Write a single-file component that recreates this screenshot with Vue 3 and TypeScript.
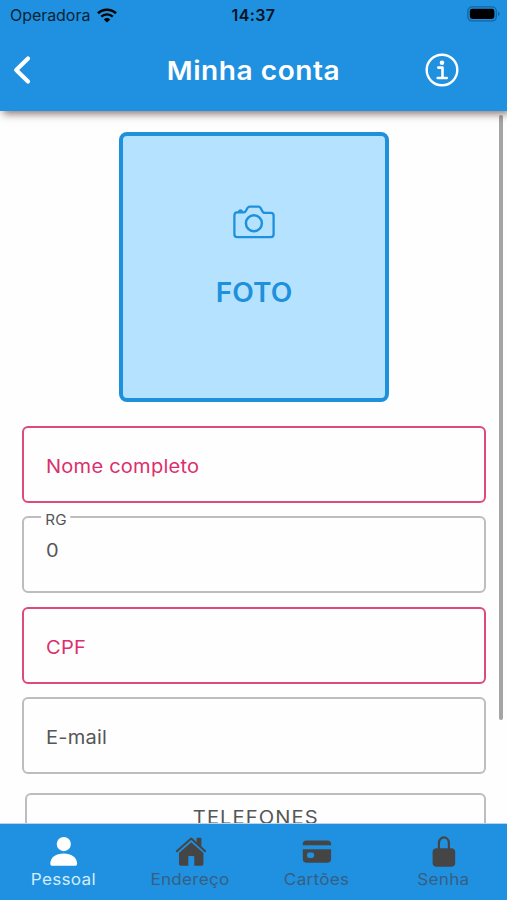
<script setup lang="ts">
interface Field {
  id: string
  label: string
  value?: string
  invalid?: boolean
}

const fields: Field[] = [
  { id: 'nome', label: 'Nome completo', invalid: true },
  { id: 'rg', label: 'RG', value: '0' },
  { id: 'cpf', label: 'CPF', invalid: true },
  { id: 'email', label: 'E-mail' },
]

const tabs = [
  { id: 'pessoal', label: 'Pessoal' },
  { id: 'endereco', label: 'Endereço' },
  { id: 'cartoes', label: 'Cartões' },
  { id: 'senha', label: 'Senha' },
]
const activeTab = 'pessoal'
</script>

<template>
  <div class="screen">
    <header class="header">
      <div class="status">
        <div class="carrier">
          <span class="carrier-name">Operadora</span>
          <svg class="wifi" width="20" height="15" viewBox="0 0 20 15">
            <path d="M1 5.3C6 .5 14 .5 19 5.3" fill="none" stroke="#000" stroke-width="2.6" />
            <path d="M4.2 8.7c3.4-3.1 8.2-3.1 11.6 0" fill="none" stroke="#000" stroke-width="2.4" />
            <path d="M6.8 11.4c1.8-1.8 4.6-1.8 6.4 0L10 14.6z" fill="#000" />
          </svg>
        </div>
        <span class="time">14:37</span>
        <div class="power">
          <svg width="34" height="16" viewBox="0 0 34 16">
            <rect x=".9" y=".9" width="28.4" height="14" rx="4.2" fill="none" stroke="#12669f" stroke-width="1.3" />
            <rect x="2.8" y="2.8" width="24.6" height="10.2" rx="2.4" fill="#000" />
            <path d="M31 5.6c2 .8 2 3.8 0 4.6z" fill="#12669f" />
          </svg>
        </div>
      </div>
      <div class="bar">
        <button class="icon-button back" aria-label="Voltar">
          <svg width="20" height="30" viewBox="0 0 20 30">
            <path d="M17 3.500 5.200 15 17 26.500" fill="none" stroke="#fff" stroke-width="4.200" stroke-linecap="round" stroke-linejoin="round" />
          </svg>
        </button>
        <h1 class="title">Minha conta</h1>
        <button class="icon-button info" aria-label="Informações">
          <svg width="34" height="34" viewBox="0 0 34 34">
            <circle cx="17" cy="17" r="15.300" fill="none" stroke="#fff" stroke-width="2.400" />
            <circle cx="17" cy="9.700" r="2.300" fill="#fff" />
            <path d="M13.300 14.600h4.200v10.100M12.700 25h9" fill="none" stroke="#fff" stroke-width="2.600" stroke-linecap="round" stroke-linejoin="round" />
          </svg>
        </button>
      </div>
    </header>

    <main class="content">
      <button class="photo">
        <svg class="camera" width="42" height="34" viewBox="0 0 42 34">
          <path d="M3.500 7.400H11c2.600 0 2.500-5.800 5.700-5.800h8.900c3 0 2.900 6.300 6.100 6.300h6.200c1.800 0 2.700.9 2.700 2.700v18.600c0 1.900-.9 2.900-2.700 2.900H4.100c-1.800 0-2.700-1-2.700-2.900V10.500c0-1.700.7-2.700 2.100-3.100z" fill="none" stroke="#1f90db" stroke-width="2.300" stroke-linejoin="round" />
          <path d="M4.600 7.200c.4-3.900 5.300-3.900 5.900 0z" fill="#1f90db" />
          <circle cx="20.900" cy="18.300" r="8" fill="none" stroke="#1f90db" stroke-width="2.500" />
        </svg>
        <span class="photo-label">FOTO</span>
      </button>

      <form class="form">
        <div v-for="f in fields" :key="f.id" class="field" :class="{ invalid: f.invalid, filled: f.value }">
          <span class="label">{{ f.label }}</span>
          <span v-if="f.value" class="value">{{ f.value }}</span>
        </div>
      </form>
      <div class="phones"><span class="phones-title">TELEFONES</span></div>
      <div class="scrollbar"></div>
    </main>

    <nav class="tabs">
      <a v-for="t in tabs" :key="t.id" class="tab" :class="{ active: t.id === activeTab }">
        <svg v-if="t.id === 'pessoal'" class="tab-icon" width="32" height="32" viewBox="0 0 32 32">
          <circle cx="16.800" cy="8.100" r="7.100" fill="currentColor" />
          <path d="M3.300 27.500c.2-6.200 5.600-10 13.300-10s13.200 3.800 13.500 10c0 1.600-.7 2.300-2.200 2.300H5.500c-1.500 0-2.200-.7-2.200-2.300z" fill="currentColor" />
        </svg>
        <svg v-else-if="t.id === 'endereco'" class="tab-icon" width="32" height="32" viewBox="0 0 32 32">
          <path d="M2.800 15.200 17.200 2.600l14 12.600" fill="none" stroke="currentColor" stroke-width="2" stroke-linecap="round" stroke-linejoin="round" />
          <path d="M22.600 2.600q0-.8.8-.8h3.200q.8 0 .8.800v8.300l-4.800-4.300z" fill="currentColor" />
          <path d="M17.200 6.300 29.400 17v10.800c0 1.300-.7 2-2 2h-7.100v-8.300c0-1-.4-1.400-1.300-1.400h-3.400c-.9 0-1.300.4-1.300 1.400v8.300H7c-1.300 0-2-.7-2-2V17z" fill="currentColor" />
        </svg>
        <svg v-else-if="t.id === 'cartoes'" class="tab-icon" width="32" height="32" viewBox="0 0 32 32">
          <path d="M1.800 9.200V8.100c0-2.300 1.300-3.600 3.500-3.600h21.300c2.200 0 3.500 1.300 3.500 3.600v1.100z" fill="currentColor" />
          <path fill-rule="evenodd" d="M1.800 13.300h28.300v9.800c0 2.300-1.300 3.600-3.500 3.600H5.300c-2.200 0-3.500-1.300-3.500-3.600zM8.200 16.500c-2.900 0-2.900 5.400 0 5.400h2.800c2.900 0 2.900-5.400 0-5.400z" fill="currentColor" />
        </svg>
        <svg v-else class="tab-icon" width="32" height="32" viewBox="0 0 32 32">
          <path d="M10.900 14V7.300c0-7.800 10-7.800 10 0V14" fill="none" stroke="currentColor" stroke-width="2.200" />
          <rect x="4.600" y="12.200" width="22.600" height="18.600" rx="4" fill="currentColor" />
        </svg>
        <span class="tab-label">{{ t.label }}</span>
      </a>
    </nav>
  </div>
</template>

<style>
body {
  margin: 0;
  background: #fff;
}
</style>

<style scoped>
.screen {
  display: flex;
  flex-direction: column;
  width: 507px;
  height: 900px;
  overflow: hidden;
  background: #fefefe;
  color: #4a4a4a;
  font-family: Inter, "Noto Sans", sans-serif;
}
.header {
  position: relative;
  z-index: 1;
  flex: none;
  box-sizing: border-box;
  height: 111px;
  background: #1f91e0;
  box-shadow: 3px 3px 8px rgba(60, 35, 30, 0.6);
}
.status {
  display: grid;
  grid-template-columns: 1fr auto 1fr;
  align-items: center;
  height: 30px;
  padding: 0 6px 0 10px;
  color: #000;
}
.carrier {
  display: flex;
  align-items: center;
  gap: 7px;
}
.carrier-name {
  color: #0a2436;
  font-size: 16px;
  letter-spacing: -0.050px;
}
.wifi {
  display: block;
}
.time {
  margin: 0 4px 0 0;
  color: #06141f;
  font-size: 16px;
  font-weight: 600;
  letter-spacing: 0.4px;
}
.power {
  display: flex;
  justify-content: flex-end;
  padding-bottom: 2px;
}
.bar {
  display: grid;
  grid-template-columns: 82px 1fr 82px;
  align-items: center;
  height: 80px;
}
.icon-button {
  display: flex;
  padding: 0;
  border: 0;
  background: none;
}
.back {
  padding-left: 11px;
}
.title {
  margin: 0;
  padding-top: 2px;
  color: #fff;
  font-size: 26px;
  font-weight: 600;
  line-height: 40px;
  letter-spacing: 0.5px;
  text-align: center;
  transform: scaleX(1.080);
}
.content {
  position: relative;
  display: flex;
  flex: 1;
  min-height: 0;
  flex-direction: column;
  overflow: hidden;
  padding: 21px 21px 0 22px;
}
.photo {
  display: flex;
  flex: none;
  flex-direction: column;
  align-items: center;
  align-self: center;
  gap: 35px;
  box-sizing: border-box;
  width: 270px;
  height: 270px;
  padding: 69px 0 0;
  border: 4px solid #1f90db;
  border-radius: 8px;
  background: #b5e3ff;
  color: #1f90db;
  font-family: inherit;
}
.camera {
  display: block;
}
.photo-label {
  font-size: 26.500px;
  font-weight: 600;
  line-height: 36px;
  transform: scaleX(1.060);
}
.form {
  display: flex;
  flex: none;
  flex-direction: column;
  gap: 13.300px;
  margin-top: 24px;
}
.field {
  position: relative;
  display: flex;
  align-items: center;
  box-sizing: border-box;
  height: 77px;
  padding: 3px 22px 0 21.500px;
  border: 2px solid #bdbdbd;
  border-radius: 6px;
  color: #565656;
  font-size: 18.500px;
}
.field.invalid {
  border-color: #dd4a7b;
  color: #dc2e6c;
}
.label,
.value {
  letter-spacing: 0.2px;
  transform: scaleX(1.085);
  transform-origin: left;
}
.filled .label {
  position: absolute;
  top: -7px;
  left: 17px;
  padding: 0 3px 0 4px;
  background: #fefefe;
  font-size: 14px;
  line-height: 18px;
}
.value {
  padding-bottom: 13px;
}
.phones {
  display: flex;
  flex: none;
  justify-content: center;
  box-sizing: border-box;
  height: 77px;
  margin: 19px 0 0 3px;
  padding-top: 10px;
  border: 2px solid #bdbdbd;
  border-radius: 6px;
}
.phones-title {
  color: #565656;
  font-size: 18.500px;
  line-height: 24px;
  letter-spacing: 1px;
  transform: scaleX(1.090);
}
.scrollbar {
  position: absolute;
  top: 4px;
  right: 4px;
  width: 4px;
  height: 605px;
  border-radius: 2px;
  background: #a4a4a4;
}
.tabs {
  position: relative;
  display: grid;
  flex: none;
  grid-template-columns: repeat(4, 1fr);
  box-sizing: border-box;
  height: 77px;
  border-top: 1px solid #b9d5ea;
  background: #1f91e0;
}
.tab {
  display: flex;
  flex-direction: column;
  align-items: center;
  padding-top: 12px;
  color: #454545;
}
.tab-icon {
  display: block;
}
.tab-label {
  color: #375f82;
  font-size: 16px;
  line-height: 22px;
  letter-spacing: 0.250px;
  transform: scaleX(1.070);
}
.tab.active {
  color: #fff;
}
.tab.active .tab-label {
  color: #d3edff;
}
</style>
